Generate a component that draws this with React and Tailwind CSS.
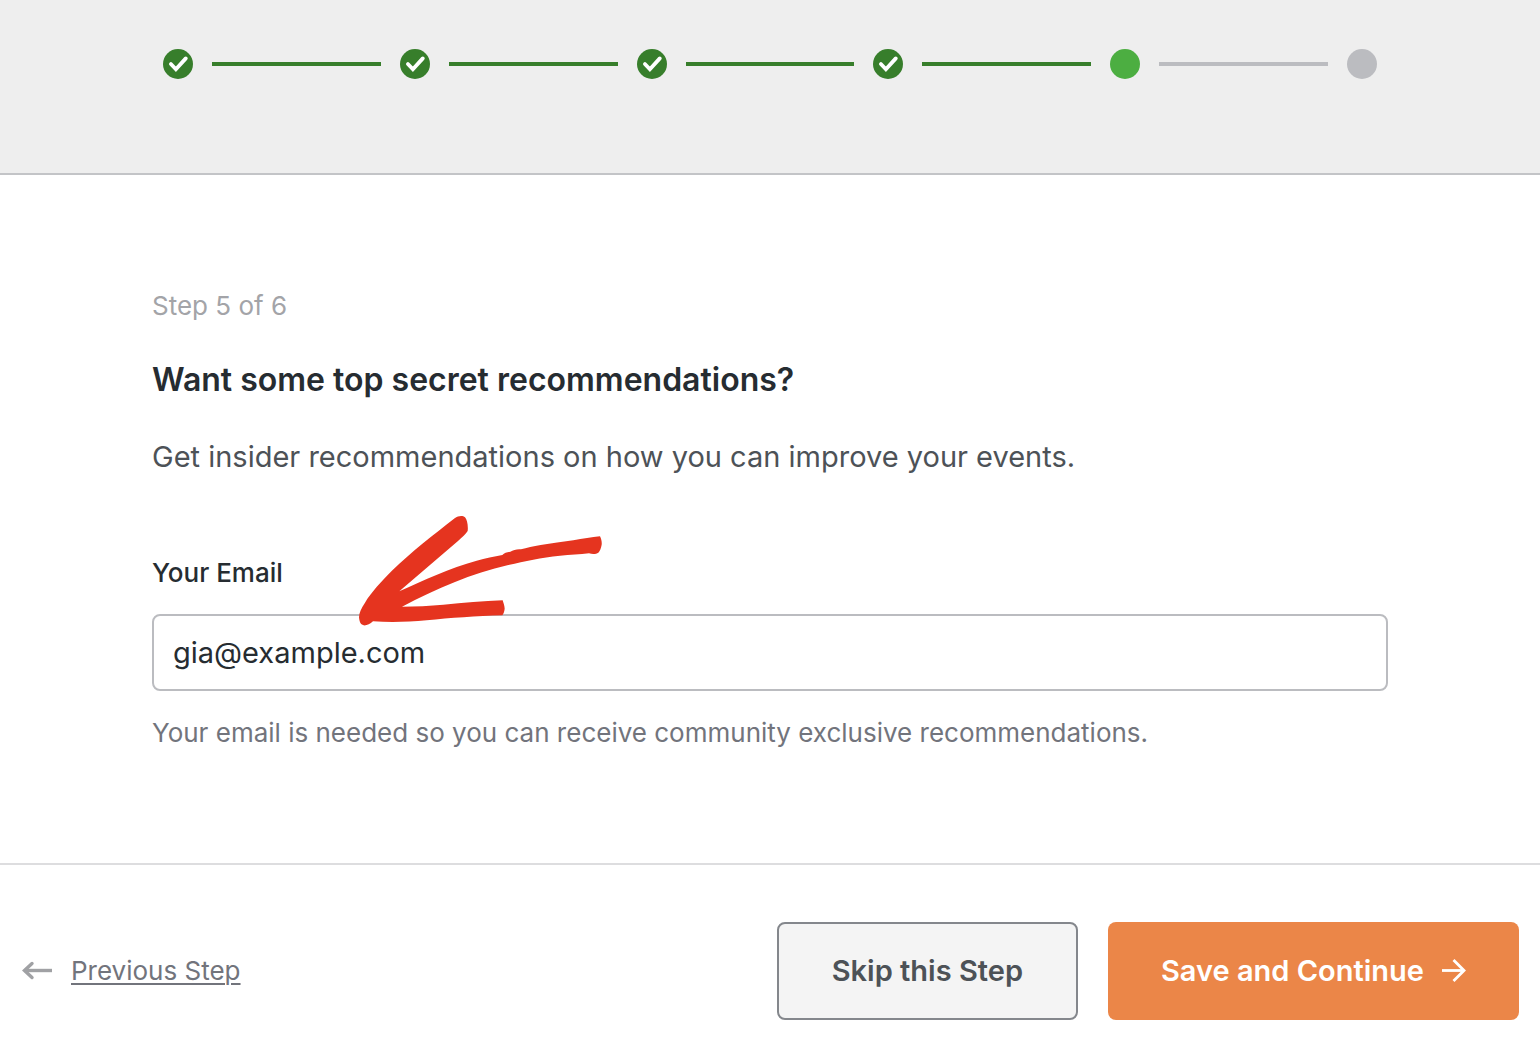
import { useState } from 'react';

const STEPS = ['done', 'done', 'done', 'done', 'current', 'upcoming'];

const dotColors = {
    done: 'bg-[#377e2b]',
    current: 'bg-[#4cae41]',
    upcoming: 'bg-[#bbbcc0]',
};

function StepDot({ state }) {
    return (
        <span className={`flex size-[30px] shrink-0 items-center justify-center rounded-full ${dotColors[state]}`}>
            {state === 'done' && (
                <svg viewBox="0 0 30 30" className="size-full" fill="none" stroke="#fff" strokeWidth="3.8" aria-hidden="true">
                    <path d="M7.9 15 L12.9 20.2 L22.8 9.4" strokeLinecap="round" strokeLinejoin="miter" />
                </svg>
            )}
        </span>
    );
}

function Progress() {
    return (
        <header className="border-b-2 border-[#c3c4c7] bg-[#eeeeee] px-[163px] pt-[49px] pb-[94px]">
            <ol className="flex items-center">
                {STEPS.map((state, i) => (
                    <li key={i} className={`flex items-center ${i > 0 ? 'flex-1' : ''}`}>
                        {i > 0 && (
                            <span className={`mx-[19px] h-1 flex-1 ${state === 'upcoming' ? 'bg-[#bbbcc0]' : 'bg-[#377e2b]'}`} />
                        )}
                        <StepDot state={state} />
                    </li>
                ))}
            </ol>
        </header>
    );
}

function RedArrow() {
    return (
        <svg
            viewBox="51 45 738 336"
            className="pointer-events-none absolute -top-[99px] left-[205px] h-28 w-[246px]"
            fill="#e5341f"
            aria-hidden="true"
        >
            <path d="M57 352 C57 338 64 325 75 308 C93 278 124 244 158 210 C212 158 280 105 344 55 C355 47 368 46 375 52 C381 59 385 76 383 93 C378 102 366 112 354 123 L178 274 C250 242 330 203 410 182 C436 175 462 170 487 165 C493 159 500 156 511 155 C520 150 530 147 543 148 C560 143 580 139 602 135 C635 130 668 125 700 121 C728 116 755 111 780 109 C784 117 786 126 785 134 C783 144 780 153 775 158 C768 163 757 163 747 160 C720 163 690 164 660 167 C603 173 555 184 505 195 C395 220 290 266 186 320 C225 320 270 317 310 314 C370 309 430 303 488 301 C490 308 494 318 494 326 C493 334 491 341 487 346 C410 348 330 354 260 361 C205 366 150 367 99 364 C90 372 80 377 71 376 C61 374 58 363 57 352 Z" />
        </svg>
    );
}

function EmailForm() {
    const [email, setEmail] = useState('gia@example.com');

    return (
        <main className="px-[152px] pt-[115px] pb-[114px]">
            <p className="text-[26px] leading-8 text-[#a3a4a8]">Step 5 of 6</p>
            <h1 className="mt-9 text-[32px] leading-11 font-semibold text-[#262c31]">
                Want some top secret recommendations?
            </h1>
            <p className="mt-[35px] text-[29px] leading-10 text-[#4d5257]">
                Get insider recommendations on how you can improve your events.
            </p>
            <label htmlFor="email" className="mt-20 block text-[26px] leading-8 font-medium text-[#262c31]">
                Your Email
            </label>
            <div className="relative mt-[25px]">
                <input
                    id="email"
                    type="email"
                    value={email}
                    onChange={(e) => setEmail(e.target.value)}
                    className="block h-[77px] w-full rounded-lg border-2 border-[#bbbcc0] bg-white px-[19px] text-[29px] text-[#262c31] outline-none"
                />
                <RedArrow />
            </div>
            <p className="mt-[26px] text-[26px] leading-8 text-[#72747c]">
                Your email is needed so you can receive community exclusive recommendations.
            </p>
        </main>
    );
}

function Footer() {
    return (
        <footer className="flex items-center justify-between border-t-2 border-[#dddddf] px-[21px] pt-[57px] pb-[21px]">
            <div className="flex items-center gap-[18px]">
                <svg viewBox="0 0 32 20" className="h-5 w-8" fill="none" stroke="#a0a1a4" strokeWidth="3.4" aria-hidden="true">
                    <path d="M3.5 9.5 H31" />
                    <path d="M11 2.5 L3.5 9.5 L11 16.5" strokeLinecap="round" />
                </svg>
                <a href="#previous" className="text-[26px] leading-8 text-[#72747c] underline decoration-2 underline-offset-3">
                    Previous Step
                </a>
            </div>
            <div className="flex gap-[30px]">
                <button
                    type="button"
                    className="h-[98px] rounded-lg border-2 border-[#84878c] bg-[#f4f4f4] px-[53px] text-[29px] font-semibold text-[#4d5257]"
                >
                    Skip this Step
                </button>
                <button
                    type="button"
                    className="flex h-[98px] items-center gap-[18px] rounded-lg bg-[#eb8648] px-[53px] text-[29px] font-semibold text-white"
                >
                    Save and Continue
                    <svg viewBox="0 0 24 24" className="size-6" fill="none" stroke="currentColor" strokeWidth="2.8" aria-hidden="true">
                        <path d="M0 11.5 H22" />
                        <path d="M11.5 1 L22 11.5 L11.5 22" />
                    </svg>
                </button>
            </div>
        </footer>
    );
}

export default function App() {
    return (
        <div className="min-h-screen bg-white font-['Inter',sans-serif]">
            <Progress />
            <EmailForm />
            <Footer />
        </div>
    );
}
